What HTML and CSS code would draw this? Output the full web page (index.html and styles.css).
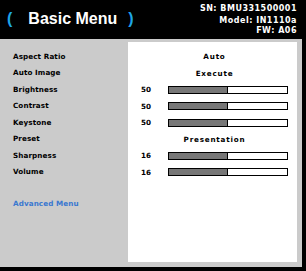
FILE: index.html
```html
<!DOCTYPE html>
<html lang="en">
<head>
    <meta charset="UTF-8">
    <title>Basic Menu</title>
    <link rel="stylesheet" href="styles.css">
</head>
<body>
    <div class="screen">
        <header class="top">
            <div class="title">
                <span class="paren">(</span>
                <span class="title-text">Basic Menu</span>
                <span class="paren">)</span>
            </div>
            <div class="info">
                <div class="sn">SN: BMU331500001</div>
                <div>Model: IN1110a</div>
                <div>FW: A06</div>
            </div>
        </header>

        <div class="panel">
            <!-- Menu labels -->
            <ul class="labels">
                <li>Aspect Ratio</li>
                <li>Auto Image</li>
                <li>Brightness</li>
                <li>Contrast</li>
                <li>Keystone</li>
                <li>Preset</li>
                <li>Sharpness</li>
                <li>Volume</li>
                <li class="gap"></li>
                <li class="link">Advanced Menu</li>
            </ul>

            <!-- Values -->
            <div class="values">
                <div class="row text">Auto</div>
                <div class="row text">Execute</div>
                <div class="row">
                    <span class="num">50</span>
                    <div class="bar"><div class="fill" style="width: 50%"></div></div>
                </div>
                <div class="row">
                    <span class="num">50</span>
                    <div class="bar"><div class="fill" style="width: 50%"></div></div>
                </div>
                <div class="row">
                    <span class="num">50</span>
                    <div class="bar"><div class="fill" style="width: 50%"></div></div>
                </div>
                <div class="row text">Presentation</div>
                <div class="row">
                    <span class="num">16</span>
                    <div class="bar"><div class="fill" style="width: 50%"></div></div>
                </div>
                <div class="row">
                    <span class="num">16</span>
                    <div class="bar"><div class="fill" style="width: 50%"></div></div>
                </div>
            </div>
        </div>
    </div>
</body>
</html>
```

FILE: styles.css
```css
body {
    margin: 0;
    background: #000;
    font-family: "DejaVu Sans", Verdana, sans-serif;
}
.screen {
    width: 306px;
    height: 271px;
    background: #000;
}
.top {
    height: 39px;
    display: flex;
    justify-content: space-between;
}
.title {
    display: flex;
    align-items: center;
    padding-left: 7px;
    height: 37px;
    font-family: "Liberation Sans", Arial, sans-serif;
    font-weight: bold;
    font-size: 16px;
}
.paren {
    color: #1ea5e6;
}
.title-text {
    color: #fff;
    margin: 0 11px 0 16px;
}
.info {
    padding: 4px 9px 0 0;
    text-align: right;
    color: #fff;
    font-size: 8px;
    font-weight: bold;
    line-height: 10px;
    letter-spacing: 0.5px;
}
.info .sn {
    margin-bottom: 2px;
}
.panel {
    display: flex;
    width: 302px;
    height: 228px;
    background: #cbcbcb;
}
.labels {
    list-style: none;
    margin: 0;
    width: 128px;
    padding: 9.5px 0 0 13px;
    box-sizing: border-box;
}
.labels li {
    height: 16.5px;
    line-height: 16.5px;
    font-size: 7.2px;
    font-weight: bold;
    letter-spacing: 0.1px;
    color: #000;
}
.labels .gap {
    height: 15px;
}
.labels .link {
    color: #3a78d0;
}
.values {
    width: 169px;
    margin: 3px 0 5px;
    padding: 6.5px 9px 0 13px;
    box-sizing: border-box;
    background: #fff;
}
.row {
    height: 16.5px;
    display: flex;
    align-items: center;
    font-size: 7.2px;
    font-weight: bold;
    letter-spacing: 0.1px;
}
.row.text {
    justify-content: center;
    letter-spacing: 0.8px;
}
.num {
    width: 27px;
}
.bar {
    width: 118px;
    height: 6px;
    border: 1px solid #000;
    background: #fff;
}
.fill {
    height: 100%;
    background: #777;
    border-right: 1px solid #000;
    box-sizing: border-box;
}
```
